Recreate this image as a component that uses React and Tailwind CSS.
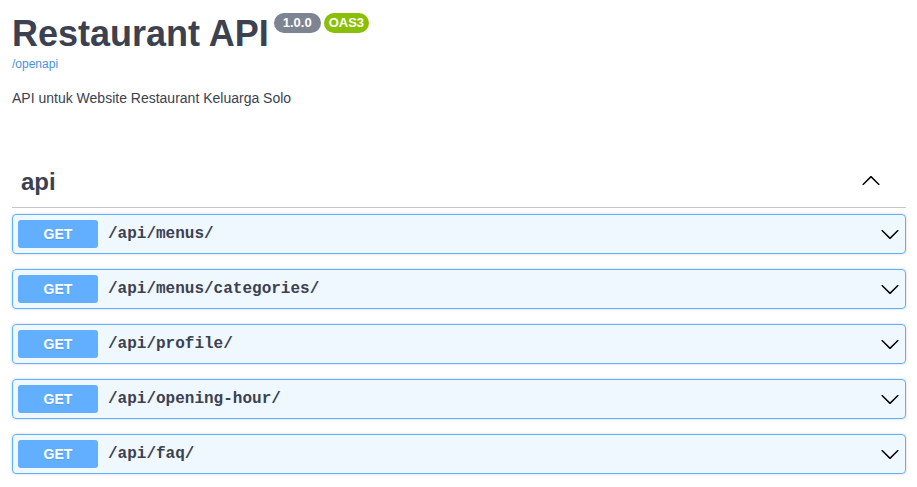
const ENDPOINTS = [
  '/api/menus/',
  '/api/menus/categories/',
  '/api/profile/',
  '/api/opening-hour/',
  '/api/faq/',
]

function ArrowDown() {
  return (
    <svg width="20" height="20" viewBox="0 0 20 20" className="shrink-0" fill="#000">
      <path d="M17.418 6.109c.272-.268.709-.268.979 0s.271.701 0 .969l-7.908 7.83c-.27.268-.707.268-.979 0l-7.908-7.83c-.27-.268-.27-.701 0-.969.271-.268.709-.268.979 0L10 13.25l7.418-7.141z" />
    </svg>
  )
}

function ArrowUp() {
  return (
    <svg width="20" height="20" viewBox="0 0 20 20" className="shrink-0" fill="#000">
      <path d="M17.418 14.908c.272.268.709.268.979 0s.271-.701 0-.969l-7.908-7.83c-.27-.268-.707-.268-.979 0l-7.908 7.83c-.27.268-.27.701 0 .969.271.268.709.268.979 0L10 7.767l7.418 7.141z" />
    </svg>
  )
}

function Operation({ path }) {
  return (
    <div className="mb-[15px] flex h-[40px] items-center rounded-[4px] border border-[#61affe] bg-[#61affe]/10 p-[5px] shadow-[0_0_3px_rgba(0,0,0,0.19)]">
      <span className="flex h-[28px] w-[80px] shrink-0 items-center justify-center rounded-[3px] bg-[#61affe] text-[14px] font-bold text-white [text-shadow:0_1px_0_rgba(0,0,0,0.1)]">
        GET
      </span>
      <span className="flex-1 pl-[10px] font-['Liberation_Mono',monospace] text-[16px] font-bold text-[#3b4151]">
        {path}
      </span>
      <ArrowDown />
    </div>
  )
}

export default function App() {
  return (
    <div className="min-h-screen bg-white pl-[12px] pr-[11px] font-['Liberation_Sans',Arial,sans-serif] text-[#3b4151]">
      <div className="mt-[13px] flex items-start">
        <h2 className="text-[36px] font-bold leading-[41px]">Restaurant API</h2>
        <span className="ml-[5px] flex h-[20px] items-center rounded-full bg-[#7d8492] px-[9px] text-[13px] font-bold text-white">
          1.0.0
        </span>
        <span className="ml-[3px] flex h-[20px] items-center rounded-full bg-[#89bf04] px-[5px] text-[13px] font-bold text-white">
          OAS3
        </span>
      </div>
      <div className="mt-[3px] text-[12px] leading-[14px] text-[#4990e2]">/openapi</div>
      <p className="mt-[19px] text-[14px] leading-[16px]">API untuk Website Restaurant Keluarga Solo</p>

      <div className="mt-[62px] flex h-[40px] items-start justify-between border-b border-[#c4c6cb] pl-[9px]">
        <span className="text-[24px] font-bold leading-[28px]">api</span>
        <span className="mr-[25px] mt-[2px]">
          <ArrowUp />
        </span>
      </div>

      <div className="mt-[6px]">
        {ENDPOINTS.map((p) => (
          <Operation key={p} path={p} />
        ))}
      </div>
    </div>
  )
}
